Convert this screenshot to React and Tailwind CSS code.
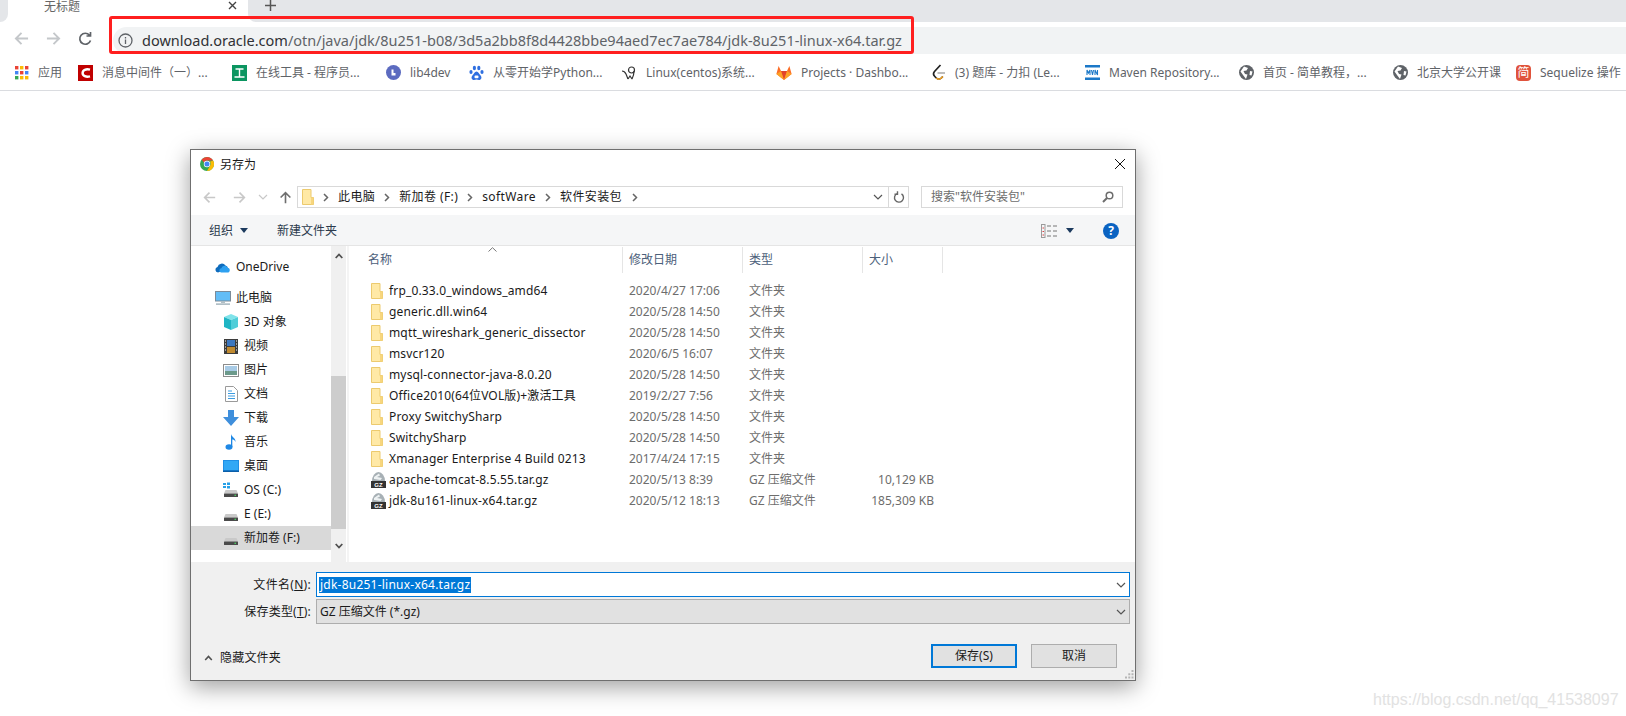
// App.jsx - Chrome window with the Windows "save as" dialog on top
const bookmarks = [
  { icon: 'apps', label: '应用', w: 'w-[63px]' },
  { icon: 'csdn', label: '消息中间件（一）...', w: 'w-[154px]' },
  { icon: 'tool', label: '在线工具 - 程序员...', w: 'w-[154px]' },
  { icon: 'lib', label: 'lib4dev', w: 'w-[83px]' },
  { icon: 'baidu', label: '从零开始学Python...', w: 'w-[152px]' },
  { icon: 'linux', label: 'Linux(centos)系统...', w: 'w-[155px]' },
  { icon: 'gitlab', label: 'Projects · Dashbo...', w: 'w-[156px]' },
  { icon: 'leet', label: '(3) 题库 - 力扣 (Le...', w: 'w-[153px]' },
  { icon: 'maven', label: 'Maven Repository...', w: 'w-[154px]' },
  { icon: 'globe', label: '首页 - 简单教程，...', w: 'w-[154px]' },
  { icon: 'globe', label: '北京大学公开课', w: 'w-[123px]' },
  { icon: 'jian', label: 'Sequelize 操作', w: 'w-[110px]' },
]

const places = [
  { icon: '3d', label: '3D 对象' },
  { icon: 'video', label: '视频' },
  { icon: 'picture', label: '图片' },
  { icon: 'doc', label: '文档' },
  { icon: 'download', label: '下载' },
  { icon: 'music', label: '音乐' },
  { icon: 'desktop', label: '桌面' },
  { icon: 'os', label: 'OS (C:)' },
  { icon: 'drive', label: 'E (E:)' },
  { icon: 'drive', label: '新加卷 (F:)', active: true },
]

const files = [
  ['frp_0.33.0_windows_amd64', '2020/4/27 17:06', '文件夹', ''],
  ['generic.dll.win64', '2020/5/28 14:50', '文件夹', ''],
  ['mqtt_wireshark_generic_dissector', '2020/5/28 14:50', '文件夹', ''],
  ['msvcr120', '2020/6/5 16:07', '文件夹', ''],
  ['mysql-connector-java-8.0.20', '2020/5/28 14:50', '文件夹', ''],
  ['Office2010(64位VOL版)+激活工具', '2019/2/27 7:56', '文件夹', ''],
  ['Proxy SwitchySharp', '2020/5/28 14:50', '文件夹', ''],
  ['SwitchySharp', '2020/5/28 14:50', '文件夹', ''],
  ['Xmanager Enterprise 4 Build 0213', '2017/4/24 17:15', '文件夹', ''],
  ['apache-tomcat-8.5.55.tar.gz', '2020/5/13 8:39', 'GZ 压缩文件', '10,129 KB'],
  ['jdk-8u161-linux-x64.tar.gz', '2020/5/12 18:13', 'GZ 压缩文件', '185,309 KB'],
]

const crumbs = ['此电脑', '新加卷 (F:)', 'softWare', '软件安装包']

function BookmarkIcon({ name }) {
  if (name === 'apps') {
    const colors = ['#ea4335', '#fbbc05', '#ea4335', '#4285f4', '#ea4335', '#4285f4', '#34a853', '#fbbc05', '#fbbc05']
    return (
      <svg width="14" height="14" viewBox="0 0 14 14">
        {colors.map((c, i) => (
          <rect key={i} x={(i % 3) * 5} y={Math.floor(i / 3) * 5} width="3.4" height="3.4" fill={c} />
        ))}
      </svg>
    )
  }
  if (name === 'csdn') {
    return (
      <svg width="15" height="16" viewBox="0 0 15 16">
        <rect width="15" height="16" fill="#c00000" />
        <path d="M12 4.6C8 3.6 4.6 5 4.6 8s3.4 4.4 7.4 3.4" fill="none" stroke="#fff" strokeWidth="2.4" />
      </svg>
    )
  }
  if (name === 'tool') {
    return (
      <svg width="15" height="16" viewBox="0 0 15 16">
        <rect width="15" height="16" fill="#0b9560" />
        <path d="M3.5 4h8M7.5 4v8M2.5 12h10" stroke="#fff" strokeWidth="1.4" />
      </svg>
    )
  }
  if (name === 'lib') {
    return (
      <svg width="15" height="15" viewBox="0 0 15 15">
        <circle cx="7.5" cy="7.5" r="7.5" fill="#5c6bc0" />
        <path d="M5.5 4.5v6h4v-2.5h-2v-3.5z" fill="#fff" />
      </svg>
    )
  }
  if (name === 'baidu') {
    return (
      <svg width="15" height="16" viewBox="0 0 15 16" fill="#2f6fe0">
        <ellipse cx="2" cy="7" rx="1.6" ry="2.1" />
        <ellipse cx="5.4" cy="3" rx="1.6" ry="2.2" />
        <ellipse cx="9.8" cy="3" rx="1.6" ry="2.2" />
        <ellipse cx="13" cy="7" rx="1.6" ry="2.1" />
        <path d="M7.5 6.5C5.5 6.5 5 9 3.4 10.4 1.8 12 2.6 15 5 15c1 0 1.6-.4 2.5-.4s1.600.4 2.500.4c2.400 0 3.200-3 1.600-4.600C10 9 9.500 6.500 7.500 6.500z" />
        <rect x="5.500" y="10.500" width="4" height="2.800" rx="1" fill="#fff" />
      </svg>
    )
  }
  if (name === 'linux') {
    return (
      <svg width="16" height="16" viewBox="0 0 16 16" fill="none" stroke="#333" strokeWidth="1.2">
        <path d="M1 6c2 0 3 1 4 3l2 5" />
        <circle cx="10.500" cy="5" r="3" />
        <path d="M13 6c0 3-1 6-2 8M7 14l2-3 2 3" />
      </svg>
    )
  }
  if (name === 'gitlab') {
    return (
      <svg width="16" height="15" viewBox="0 0 16 15">
        <path d="M8 15L.4 9 2.600 1 5 6h6l2.400-5 2.200 8z" fill="#fc6d26" />
        <path d="M8 15L5 6h6z" fill="#e24329" />
        <path d="M8 15L.4 9 5 6z" fill="#fca326" />
        <path d="M8 15l7.600-6L11 6z" fill="#fca326" />
      </svg>
    )
  }
  if (name === 'leet') {
    return (
      <svg width="14" height="17" viewBox="0 0 14 17" fill="none" strokeWidth="1.7">
        <path d="M8.500 1L2.500 7.500c-1.500 1.800-1 3.700.3 5l1.500 1.500c1.500 1.400 3.500 1.400 5 0l1.500-1.500" stroke="#222" />
        <path d="M5.500 9h7.500" stroke="#b0b0b0" />
        <path d="M4.300 14c1.500 1.400 3.500 1.400 5 0l1.500-1.500" stroke="#f0a020" />
      </svg>
    )
  }
  if (name === 'maven') {
    return (
      <svg width="15" height="15" viewBox="0 0 15 15">
        <rect width="15" height="2.500" fill="#1b78c8" />
        <rect y="12.500" width="15" height="2.500" fill="#1b78c8" />
        <path d="M1 10V5l1.500 3L4 5v5M5.500 5l1 5 1-5M9 10V5l2.500 5V5" transform="translate(1 0)" fill="none" stroke="#1b78c8" strokeWidth="1.100" />
      </svg>
    )
  }
  if (name === 'globe') {
    return (
      <svg width="15" height="15" viewBox="0 0 15 15">
        <circle cx="7.500" cy="7.500" r="7.500" fill="#5f6368" />
        <path d="M5 1.500L9 3 7.500 5.500 4.500 6l1.500 3 2.500.5L7 14 4 10 1.500 6.500zM11 6l2.500.5-1 4-2-.5z" fill="#fff" />
      </svg>
    )
  }
  return (
    <div className="flex h-4 w-[15px] items-center justify-center rounded-sm bg-[#e0533c] text-[12px] leading-none text-white">简</div>
  )
}

function ChromeIcon() {
  return (
    <svg width="14" height="14" viewBox="0 0 24 24">
      <circle cx="12" cy="12" r="12" fill="#34a853" />
      <path d="M12 0a12 12 0 0 1 10.400 6H12a6 6 0 0 0-5.400 3.400L2.800 4.300A12 12 0 0 1 12 0z" fill="#ea4335" />
      <path d="M22.400 6A12 12 0 0 1 12 24l5.200-9A6 6 0 0 0 17 8z" fill="#fbbc05" />
      <circle cx="12" cy="12" r="5.500" fill="#fff" />
      <circle cx="12" cy="12" r="4.300" fill="#4285f4" />
    </svg>
  )
}

function PlaceIcon({ name }) {
  if (name === 'onedrive') {
    return (
      <svg width="16" height="11" viewBox="0 0 16 11">
        <path d="M3 10.500a2.800 2.800 0 0 1-.5-5.500A4.500 4.500 0 0 1 10.500 3.500 3.600 3.600 0 0 1 13 6.500z" fill="#0f6cbd" />
        <path d="M6 10.500a2.200 2.200 0 0 1 .3-4.300 3.400 3.400 0 0 1 6.300-.4 2.500 2.500 0 0 1 .9 4.700z" fill="#2da0f0" />
      </svg>
    )
  }
  if (name === 'pc') {
    return (
      <svg width="16" height="14" viewBox="0 0 16 14">
        <rect x=".5" y=".5" width="15" height="9.500" fill="#63bdf6" stroke="#7b8b99" />
        <rect x="6" y="10" width="4" height="2" fill="#b0bec5" />
        <rect x="1" y="12.500" width="14" height="1.200" fill="#90a4ae" />
      </svg>
    )
  }
  if (name === '3d') {
    return (
      <svg width="16" height="16" viewBox="0 0 16 16">
        <path d="M8 0l7 3-7 3-7-3z" fill="#7fe3ea" />
        <path d="M1 3l7 3v10l-7-3z" fill="#1fb5c4" />
        <path d="M15 3L8 6v10l7-3z" fill="#4fcdd8" />
      </svg>
    )
  }
  if (name === 'video') {
    return (
      <svg width="14" height="15" viewBox="0 0 14 15">
        <rect width="14" height="15" fill="#3c3c3c" />
        <rect x="3" y="1" width="8" height="6" fill="#3d78c0" />
        <rect x="3" y="8" width="8" height="6" fill="#c08a30" />
        <path d="M1 2h1M1 5h1M1 8h1M1 11h1M12 2h1M12 5h1M12 8h1M12 11h1" stroke="#fff" />
      </svg>
    )
  }
  if (name === 'picture') {
    return (
      <svg width="16" height="13" viewBox="0 0 16 13">
        <rect x=".5" y=".5" width="15" height="12" fill="#fff" stroke="#8c8c8c" />
        <rect x="2" y="2" width="12" height="5" fill="#a8cbe6" />
        <rect x="2" y="7" width="12" height="4" fill="#6c9a8b" />
      </svg>
    )
  }
  if (name === 'doc') {
    return (
      <svg width="13" height="16" viewBox="0 0 13 16">
        <path d="M.5.5h8l4 4v11H.5z" fill="#fff" stroke="#9a9a9a" />
        <path d="M3 5h4M3 7.500h7M3 10h7M3 12.500h7" stroke="#3c9be0" />
      </svg>
    )
  }
  if (name === 'download') {
    return (
      <svg width="16" height="16" viewBox="0 0 16 16">
        <path d="M5 0h6v7h5l-8 9-8-9h5z" fill="#3f8fdc" />
      </svg>
    )
  }
  if (name === 'music') {
    return (
      <svg width="12" height="16" viewBox="0 0 12 16">
        <ellipse cx="4" cy="13" rx="3.500" ry="2.700" fill="#1e88e5" />
        <path d="M6 13V0c.5 3 5 4 4.500 8C10 6 8 5.500 7.300 5.500V13z" fill="#1e88e5" />
      </svg>
    )
  }
  if (name === 'desktop') {
    return (
      <svg width="16" height="12" viewBox="0 0 16 12">
        <rect width="16" height="12" fill="#1f8fe5" />
        <rect x="1" y="1" width="14" height="9" fill="#31a8f5" />
        <rect y="10.500" width="16" height="1.500" fill="#0b5ea8" />
      </svg>
    )
  }
  return (
    <svg width="16" height="16" viewBox="0 0 16 16">
      {name === 'os' && <path d="M0 1h3v2H0zM4 .5h3v2.500H4zM0 4h3v2H0zM4 4h3v2.500H4z" fill="#26a0e8" />}
      <path d="M2.500 8h11L15 11.500H1z" fill="#c9c9c9" />
      <rect x="1" y="11.500" width="14" height="3.500" rx=".5" fill="#4a4a4a" />
      <rect x="11.500" y="12.700" width="1.500" height="1.200" fill="#4cd964" />
    </svg>
  )
}

function FolderIcon() {
  return (
    <svg width="12" height="16" viewBox="0 0 12 16">
      <path d="M.5.500h8.500v8h2.500v7H.5z" fill="#ffe9a6" stroke="#ecca6e" />
      <path d="M9 8.500h2.500v7H9z" fill="#f7d67e" />
    </svg>
  )
}

function ArchiveIcon() {
  return (
    <svg width="17" height="17" viewBox="0 0 17 17">
      <path d="M2 10a6.500 9 0 0 1 13 0z" fill="#a7b0b5" />
      <path d="M4 6l5-3.500 1 2-3 1.500 5 1-1.500 2L4 8z" fill="#eef2f3" />
      <rect x="1" y="10" width="15" height="7" fill="#333" />
      <text x="8.500" y="15.800" textAnchor="middle" fontSize="6" fontWeight="700" fill="#fff" fontFamily="Liberation Sans, sans-serif">GZ</text>
    </svg>
  )
}

function Chevron({ className = '', stroke = '#666' }) {
  return (
    <svg className={className} width="6" height="9" viewBox="0 0 6 9" fill="none" stroke={stroke} strokeWidth="1.500">
      <path d="M1 1l3.500 3.500L1 8" />
    </svg>
  )
}

function ChevronDown({ stroke = '#555' }) {
  return (
    <svg width="10" height="6" viewBox="0 0 10 6" fill="none" stroke={stroke} strokeWidth="1.200">
      <path d="M1 1l4 4 4-4" />
    </svg>
  )
}

function Caret() {
  return (
    <svg width="10" height="5" viewBox="0 0 10 5"><path d="M1 0h8L5 5z" fill="#1c3a5e" /></svg>
  )
}

function Arrow({ dir = 'left', color = '#c8c8c8', size = 16 }) {
  const rot = { left: 'rotate-0', right: 'rotate-180', up: 'rotate-90' }[dir]
  return (
    <svg className={rot} width={size} height={size} viewBox="0 0 16 16" fill="none" stroke={color} strokeWidth="2">
      <path d="M15 8H2M8 2L2 8l6 6" />
    </svg>
  )
}

function ScrollArrow({ down }) {
  return (
    <svg className={down ? 'rotate-180' : ''} width="8" height="6" viewBox="0 0 8 6" fill="none" stroke="#505050" strokeWidth="1.800">
      <path d="M.7 5L4 1.500 7.300 5" />
    </svg>
  )
}

function Sidebar() {
  return (
    <div className="flex h-full w-[158px] shrink-0 border-r-2 border-[#f4f4f4]">
      <div className="h-full w-[140px] shrink-0 pt-[9px] text-[#1a1a1a]">
        <div className="flex h-6 items-center pl-[24px]">
          <div className="flex w-[21px] justify-start"><PlaceIcon name="onedrive" /></div>
          <span>OneDrive</span>
        </div>
        <div className="mt-[7px] flex h-6 items-center pl-[24px]">
          <div className="flex w-[21px] justify-start"><PlaceIcon name="pc" /></div>
          <span>此电脑</span>
        </div>
        {places.map((p) => (
          <div key={p.label} className={`flex h-6 items-center pl-[32px] ${p.active ? 'bg-[#d9d9d9]' : ''}`}>
            <div className="flex w-[21px] justify-center pr-[5px]"><PlaceIcon name={p.icon} /></div>
            <span>{p.label}</span>
          </div>
        ))}
      </div>
      <div className="flex h-full w-[15px] shrink-0 flex-col items-center bg-[#f0f0f0]">
        <div className="flex h-[17px] items-center pt-[2px]"><ScrollArrow /></div>
        <div className="mt-[113px] h-[153px] w-full bg-[#cdcdcd]" />
        <div className="flex flex-1 items-center"><ScrollArrow down /></div>
      </div>
    </div>
  )
}

function FileList() {
  return (
    <div className="relative h-full flex-1">
      <div className="flex h-[27px] pt-[1px] text-[#4c607a]">
        <div className="flex w-[274px] items-center border-r border-[#e5e5e5] pl-[19px]">名称</div>
        <div className="flex w-[120px] items-center border-r border-[#e5e5e5] pl-[6px]">修改日期</div>
        <div className="flex w-[120px] items-center border-r border-[#e5e5e5] pl-[6px]">类型</div>
        <div className="flex w-[80px] items-center border-r border-[#e5e5e5] pl-[6px]">大小</div>
      </div>
      <svg className="absolute left-[139px] top-[1px]" width="9" height="5" viewBox="0 0 9 5" fill="none" stroke="#777">
        <path d="M.5 4.500L4.500 .7l4 3.800" />
      </svg>
      <div className="pt-[7px]">
        {files.map(([name, date, type, size]) => (
          <div key={name} className="grid h-[21px] grid-cols-[260px_120px_120px_65px] items-center pl-[20px]">
            <div className="flex items-center">
              <div className="flex w-[20px] justify-start pl-[1px]">
                {size ? <ArchiveIcon /> : <div className="pl-[1px]"><FolderIcon /></div>}
              </div>
              <span className="whitespace-nowrap tracking-[0.15px] text-[#1a1a1a]">{name}</span>
            </div>
            <span className="text-[#6d6d6d]">{date}</span>
            <span className="text-[#6d6d6d]">{type}</span>
            <span className="whitespace-nowrap text-right text-[#6d6d6d]">{size}</span>
          </div>
        ))}
      </div>
    </div>
  )
}

function SaveDialog() {
  return (
    <div className="ml-[190px] mt-[58px] flex h-[532px] w-[946px] flex-col border border-[#6f6f6f] bg-white text-[12px] shadow-[0_6px_22px_rgba(0,0,0,0.38)]">
      {/* Title */}
      <div className="flex h-[36px] shrink-0 items-start pt-[7px]">
        <div className="ml-[9px]"><ChromeIcon /></div>
        <span className="ml-[6px] leading-[15px] text-[#1a1a1a]">另存为</span>
        <div className="flex-1" />
        <svg className="mr-[9px] mt-[1px]" width="12" height="12" viewBox="0 0 12 12" stroke="#111" strokeWidth="1">
          <path d="M1 1l10 10M11 1L1 11" />
        </svg>
      </div>

      {/* Nav row */}
      <div className="flex h-[29px] shrink-0 items-start">
        <div className="flex h-[22px] items-center pl-[12px]">
          <Arrow size={13} />
          <div className="ml-[17px]"><Arrow dir="right" size={13} /></div>
          <div className="ml-[12px]"><ChevronDown stroke="#c8c8c8" /></div>
          <div className="ml-[11px]"><Arrow dir="up" color="#6e6e6e" size={13} /></div>
        </div>
        <div className="ml-[5px] flex h-[22px] w-[612px] items-center border border-[#d9d9d9] text-[#1a1a1a]">
          <div className="ml-[4px]"><FolderIcon /></div>
          {crumbs.map((c) => (
            <div key={c} className="flex items-center">
              <Chevron className="ml-[9px]" />
              <span className="ml-[9px] whitespace-nowrap tracking-[0.4px]">{c}</span>
            </div>
          ))}
          <Chevron className="ml-[10px]" />
          <div className="flex-1" />
          <div className="mr-[5px]"><ChevronDown /></div>
          <div className="flex h-full w-[20px] items-center justify-center border-l border-[#d9d9d9]">
            <svg width="12" height="13" viewBox="0 0 12 13" fill="none" stroke="#666" strokeWidth="1.400">
              <path d="M4 2.600a4.500 4.500 0 1 0 4.500 .3M4.500 .3v3h-3" />
            </svg>
          </div>
        </div>
        <div className="ml-[12px] flex h-[22px] w-[202px] items-center border border-[#d9d9d9] pl-[9px] text-[#6d6d6d]">
          <span>搜索"软件安装包"</span>
          <div className="flex-1" />
          <svg className="mr-[8px]" width="12" height="12" viewBox="0 0 12 12" fill="none" stroke="#6d6d6d" strokeWidth="1.500">
            <circle cx="7.500" cy="4.500" r="3.300" />
            <path d="M5 7L1 11" strokeWidth="2" />
          </svg>
        </div>
      </div>

      {/* Toolbar */}
      <div className="flex h-[31px] shrink-0 items-center border-b border-[#e5e5e5] bg-[#f5f6f7] pt-[1px] text-[#2b3a4d]">
        <span className="ml-[18px]">组织</span>
        <div className="ml-[6px]"><Caret /></div>
        <span className="ml-[28px]">新建文件夹</span>
        <div className="flex-1" />
        <svg width="16" height="14" viewBox="0 0 16 14" fill="none">
          <rect x=".5" y=".5" width="3.500" height="13" stroke="#9a9a9a" />
          <path d="M1.500 4h1.500M1.500 7.500h1.500M1.500 11h1.500" stroke="#d44" />
          <path d="M6 2h4M12 2h4M6 7h4M12 7h4M6 12h4M12 12h4" stroke="#777" />
        </svg>
        <div className="ml-[8px]"><Caret /></div>
        <div className="ml-[28px] mr-[16px] flex h-4 w-4 items-center justify-center rounded-full bg-[#0a63c2] text-[12px] font-bold leading-none text-white">?</div>
      </div>

      {/* Sidebar and file list */}
      <div className="flex h-[316px] shrink-0">
        <Sidebar />
        <FileList />
      </div>

      {/* Bottom form */}
      <div className="relative flex-1 bg-[#f0f0f0] pt-[10px] text-[#1a1a1a]">
        <div className="flex items-center">
          <div className="w-[120px] text-right tracking-[0.3px]">文件名(<span className="underline">N</span>):</div>
          <div className="ml-[5px] flex h-[25px] w-[814px] items-center border border-[#0078d7] bg-white pl-[2px]">
            <span className="bg-[#0078d7] px-[1px] leading-[16px] tracking-[0.23px] text-white">jdk-8u251-linux-x64.tar.gz</span>
            <div className="flex-1" />
            <div className="mr-[3px]"><ChevronDown /></div>
          </div>
        </div>
        <div className="mt-[2px] flex items-center">
          <div className="w-[120px] text-right tracking-[0.2px]">保存类型(<span className="underline">T</span>):</div>
          <div className="ml-[5px] flex h-[25px] w-[814px] items-center border border-[#adadad] bg-[#e1e1e1] pl-[3px]">
            <span>GZ 压缩文件 (*.gz)</span>
            <div className="flex-1" />
            <div className="mr-[3px]"><ChevronDown /></div>
          </div>
        </div>
        <div className="mt-[20px] flex items-center">
          <div className="ml-[13px] mt-[3px]">
            <svg width="9" height="6" viewBox="0 0 8 6" fill="none" stroke="#505050" strokeWidth="1.600"><path d="M.7 5L4 1.500 7.300 5" /></svg>
          </div>
          <span className="ml-[7px] mt-[3px] tracking-[0.2px]">隐藏文件夹</span>
          <div className="flex-1" />
          <button className="flex h-[24px] w-[86px] items-center justify-center border-2 border-[#0078d7] bg-[#e1e1e1]">保存(S)</button>
          <button className="ml-[14px] mr-[18px] flex h-[24px] w-[86px] items-center justify-center border border-[#adadad] bg-[#e1e1e1]">取消</button>
        </div>
        <svg className="absolute bottom-[1px] right-[1px]" width="9" height="9" viewBox="0 0 9 9" fill="#b5b5b5">
          <path d="M6.500 0h2v2h-2zM3.300 3.300h2v2h-2zM6.500 3.300h2v2h-2zM0 6.500h2v2H0zM3.300 6.500h2v2h-2zM6.500 6.500h2v2h-2z" />
        </svg>
      </div>
    </div>
  )
}

export default function App() {
  return (
    <div className="relative h-[716px] w-[1626px] overflow-hidden bg-white font-['Noto_Sans','Noto_Sans_CJK_SC',sans-serif]">
      {/* Tab strip */}
      <div className="flex h-[22px] bg-white">
        <div className="w-2 rounded-br-lg bg-[#e4e6e9]" />
        <div className="relative flex w-[240px] items-start pl-[36px] text-[12px] leading-[13px] text-[#666]">
          <span>无标题</span>
          <svg className="absolute right-[11px] top-[1px]" width="9" height="9" viewBox="0 0 9 9" stroke="#444" strokeWidth="1.400">
            <path d="M1 1l7 7M8 1L1 8" />
          </svg>
        </div>
        <div className="flex flex-1 items-start rounded-bl-lg bg-[#e4e6e9] pl-[17px]">
          <svg width="11" height="11" viewBox="0 0 11 11" stroke="#555" strokeWidth="1.500">
            <path d="M5.500 0v11M0 5.500h11" />
          </svg>
        </div>
      </div>

      {/* Toolbar */}
      <div className="flex h-[33px] items-center">
        <div className="ml-[14px]"><Arrow color="#c4c7ca" size={15} /></div>
        <div className="ml-[17px]"><Arrow dir="right" color="#c4c7ca" size={15} /></div>
        <svg className="ml-[17px]" width="15" height="15" viewBox="0 0 15 15" fill="none" stroke="#5f6368" strokeWidth="1.700">
          <path d="M12.500 9.500a5.500 5.500 0 1 1-1-5.300M12.500 1v4h-4" />
        </svg>
        <div className="ml-[20px] mt-[4px] flex h-[27px] flex-1 items-center rounded-l-[14px] bg-[#f1f3f4] pl-[5px]">
          <svg width="15" height="15" viewBox="0 0 15 15" fill="none" stroke="#5f6368" strokeWidth="1.300">
            <circle cx="7.500" cy="7.500" r="6.500" />
            <path d="M7.500 6.500v4.500M7.500 4v1.500" />
          </svg>
          <span className="ml-[9px] whitespace-nowrap text-[14.5px] text-[#5f6368]">
            <span className="text-[#303134]">download.oracle.com</span>/otn/java/jdk/8u251-b08/3d5a2bb8f8d4428bbe94aed7ec7ae784/jdk-8u251-linux-x64.tar.gz
          </span>
        </div>
      </div>

      {/* Bookmarks */}
      <div className="flex h-[36px] items-center border-b border-[#dadce0] pl-[15px] text-[12px] text-[#5f6368]">
        {bookmarks.map((b) => (
          <div key={b.label} className={`flex shrink-0 items-center gap-[9px] ${b.w}`}>
            <BookmarkIcon name={b.icon} />
            <span className="whitespace-nowrap">{b.label}</span>
          </div>
        ))}
      </div>

      <SaveDialog />

      {/* Red annotation box around the address bar */}
      <div className="absolute left-[109px] top-[16px] h-[38px] w-[805px] rounded-[3px] border-[3px] border-[#ff1f1f]" />

      {/* Blog watermark */}
      <div className="absolute left-[1373px] top-[688px] whitespace-nowrap font-['Liberation_Sans',sans-serif] text-[16px] text-[#e2e2e2]">
        https://blog.csdn.net/qq_41538097
      </div>
    </div>
  )
}
